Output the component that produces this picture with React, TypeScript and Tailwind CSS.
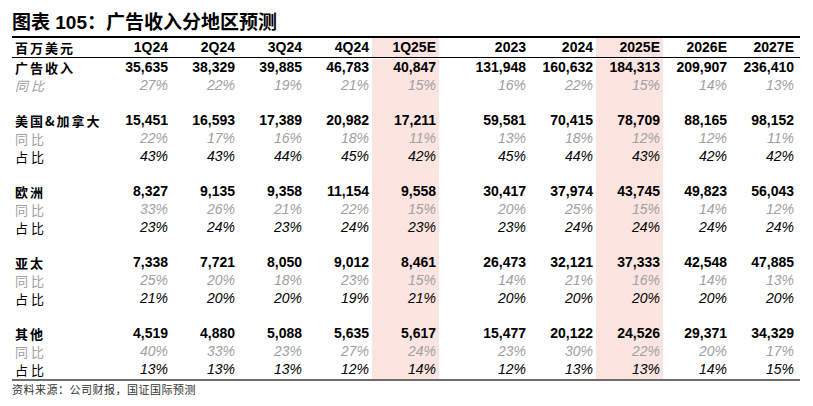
type Kind = "main" | "yoy" | "yoyFirst" | "share" | "blank"

interface Row {
  label: string
  kind: Kind
  values: string[]
}

const header = ["1Q24", "2Q24", "3Q24", "4Q24", "1Q25E", "2023", "2024", "2025E", "2026E", "2027E"]

const rows: Row[] = [
  { label: "广告收入", kind: "main", values: ["35,635", "38,329", "39,885", "46,783", "40,847", "131,948", "160,632", "184,313", "209,907", "236,410"] },
  { label: "同比", kind: "yoyFirst", values: ["27%", "22%", "19%", "21%", "15%", "16%", "22%", "15%", "14%", "13%"] },
  { label: "", kind: "blank", values: [] },
  { label: "美国&加拿大", kind: "main", values: ["15,451", "16,593", "17,389", "20,982", "17,211", "59,581", "70,415", "78,709", "88,165", "98,152"] },
  { label: "同比", kind: "yoy", values: ["22%", "17%", "16%", "18%", "11%", "13%", "18%", "12%", "12%", "11%"] },
  { label: "占比", kind: "share", values: ["43%", "43%", "44%", "45%", "42%", "45%", "44%", "43%", "42%", "42%"] },
  { label: "", kind: "blank", values: [] },
  { label: "欧洲", kind: "main", values: ["8,327", "9,135", "9,358", "11,154", "9,558", "30,417", "37,974", "43,745", "49,823", "56,043"] },
  { label: "同比", kind: "yoy", values: ["33%", "26%", "21%", "22%", "15%", "20%", "25%", "15%", "14%", "12%"] },
  { label: "占比", kind: "share", values: ["23%", "24%", "23%", "24%", "23%", "23%", "24%", "24%", "24%", "24%"] },
  { label: "", kind: "blank", values: [] },
  { label: "亚太", kind: "main", values: ["7,338", "7,721", "8,050", "9,012", "8,461", "26,473", "32,121", "37,333", "42,548", "47,885"] },
  { label: "同比", kind: "yoy", values: ["25%", "20%", "18%", "23%", "15%", "14%", "21%", "16%", "14%", "13%"] },
  { label: "占比", kind: "share", values: ["21%", "20%", "20%", "19%", "21%", "20%", "20%", "20%", "20%", "20%"] },
  { label: "", kind: "blank", values: [] },
  { label: "其他", kind: "main", values: ["4,519", "4,880", "5,088", "5,635", "5,617", "15,477", "20,122", "24,526", "29,371", "34,329"] },
  { label: "同比", kind: "yoy", values: ["40%", "33%", "23%", "27%", "24%", "23%", "30%", "22%", "20%", "17%"] },
  { label: "占比", kind: "share", values: ["13%", "13%", "13%", "12%", "14%", "12%", "13%", "13%", "14%", "15%"] },
]

const grid = "grid grid-cols-[92px_repeat(5,67px)_23px_repeat(5,67px)_3px]"
const cjk = "font-['Noto_Sans_CJK_SC',sans-serif]"
const num = "font-['Liberation_Sans','Noto_Sans_CJK_SC',sans-serif]"

// columns 4 (1Q25E) and 7 (2025E) carry the pink band
const isHot = (i: number) => i === 4 || i === 7

function Cells({ values, cls }: { values: string[]; cls: string }) {
  const cells = []
  for (let i = 0; i < 10; i++) {
    if (i === 5) cells.push(<div key="gap" />)
    cells.push(
      <div key={i} className={`pr-[3px] text-right ${isHot(i) ? "bg-[#fce4e0]" : ""} ${cls}`}>
        {values[i] ?? ""}
      </div>
    )
  }
  cells.push(<div key="end" />)
  return <>{cells}</>
}

function labelClass(kind: Kind) {
  if (kind === "main") return "font-bold text-black tracking-[2px]"
  if (kind === "share") return "text-black tracking-[3px]"
  if (kind === "yoyFirst") return "italic text-[#a0a0a0] tracking-[3px]"
  return "text-[#a0a0a0] tracking-[3px]"
}

function valueClass(kind: Kind) {
  if (kind === "main") return "font-bold text-black"
  if (kind === "share") return "italic text-black"
  return "italic text-[#a0a0a0]"
}

export default function App() {
  return (
    <div className="w-[813px] h-[406px] bg-white px-[12px] pt-[11px]">
      <h1 className={`${num} text-[19px] font-bold leading-[20px] text-black mb-[3px]`}>
        <span className={cjk}>图表</span> 105<span className={cjk}>：广告收入分地区预测</span>
      </h1>

      <div className="w-[788px] border-t-2 border-black">
        <div className={`${grid} h-[20px] border-b border-black text-[14px] leading-[19px]`}>
          <div className={`${cjk} pl-[3px] text-[13px] font-bold tracking-[2px] text-black`}>百万美元</div>
          <Cells values={header} cls={`${num} font-bold text-black`} />
        </div>

        <div className="pt-[1px] border-b-2 border-[#6e6e6e]">
          {rows.map((r, idx) => (
            <div key={idx} className={`${grid} h-[17.76px] text-[14px] leading-[17.76px]`}>
              <div className={`${cjk} pl-[3px] text-[13px] ${labelClass(r.kind)}`}>{r.label}</div>
              <Cells values={r.values} cls={`${num} ${valueClass(r.kind)}`} />
            </div>
          ))}
        </div>
      </div>

      <p className={`${cjk} mt-[1px] text-[11px] leading-[14px] tracking-[0.5px] text-[#333]`}>
        资料来源：公司财报，国证国际预测
      </p>
    </div>
  )
}
